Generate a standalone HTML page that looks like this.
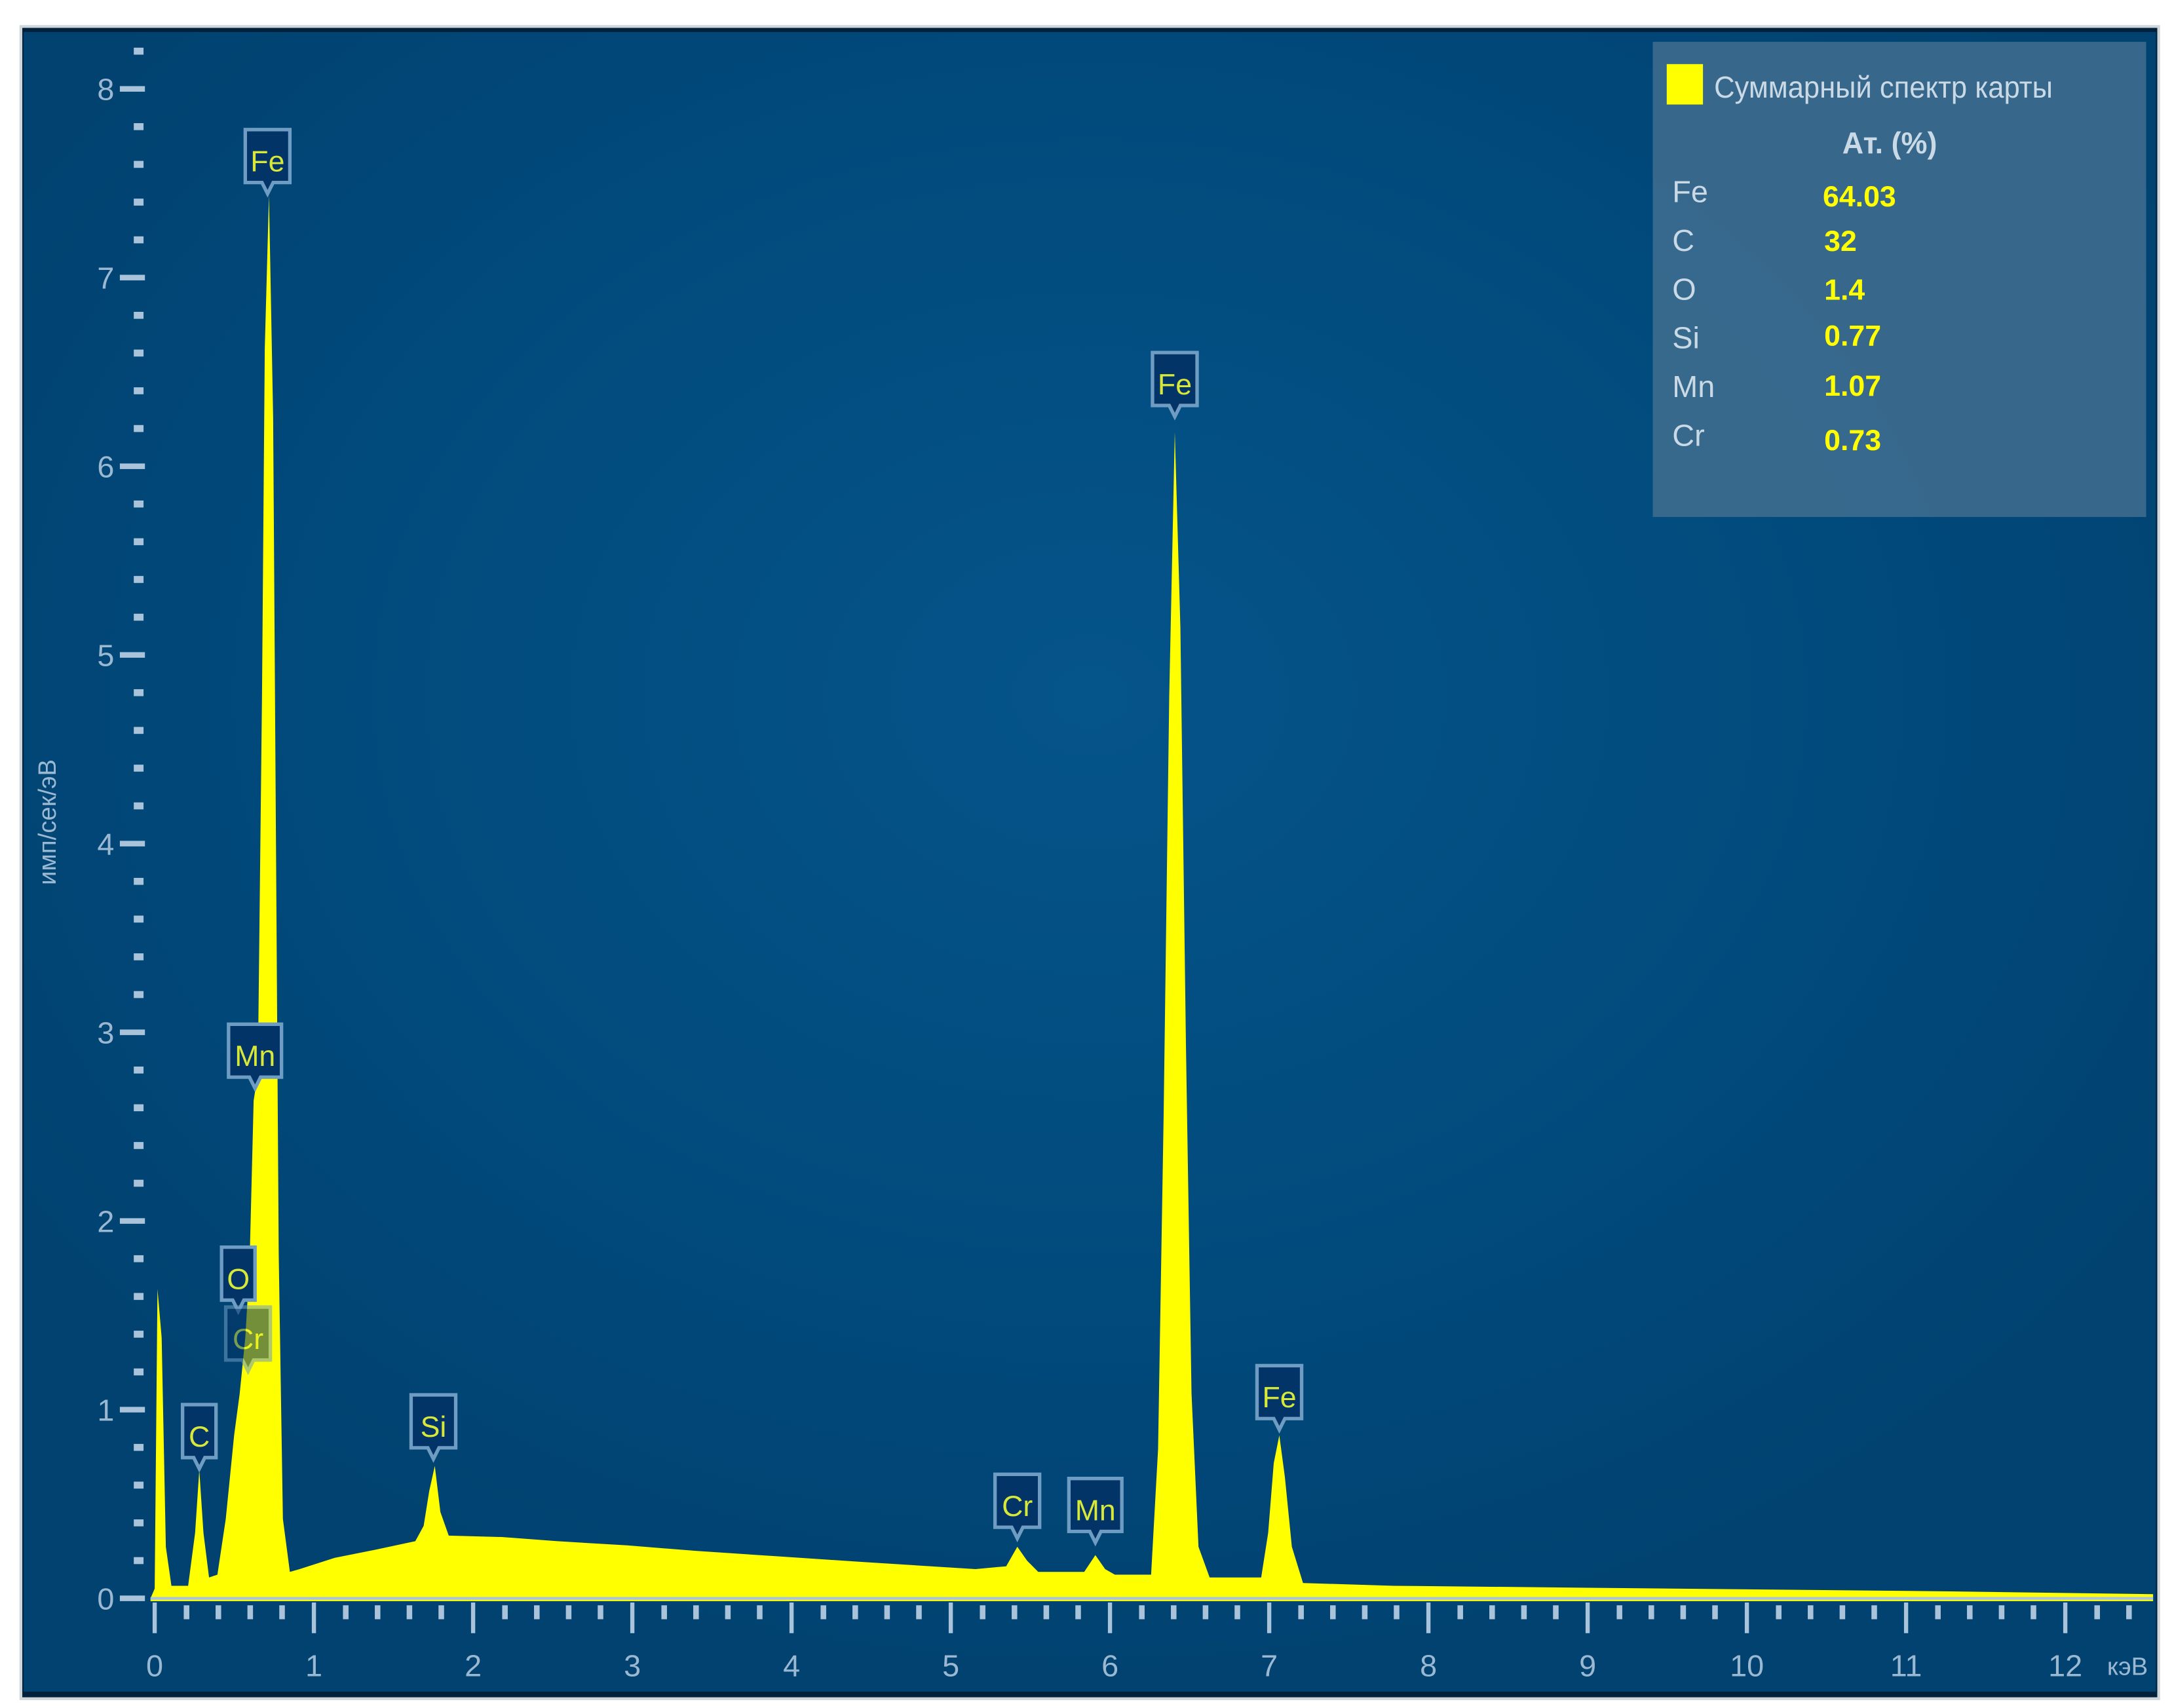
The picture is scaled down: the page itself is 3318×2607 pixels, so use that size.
<!DOCTYPE html>
<html><head><meta charset="utf-8"><style>
html,body{margin:0;padding:0;background:#fff;}
svg{display:block}
</style></head><body>
<svg id="s" width="3318" height="2607" viewBox="0 0 1560 1225.7" preserveAspectRatio="none" xmlns="http://www.w3.org/2000/svg">
<defs>
<radialGradient id="bg" cx="0.5" cy="0.4" r="0.6">
<stop offset="0" stop-color="#05548a"/>
<stop offset="0.6" stop-color="#014a7c"/>
<stop offset="1" stop-color="#014270"/>
</radialGradient>
</defs>
<rect x="0" y="0" width="1560" height="1226" fill="#fff"/>
<rect x="14" y="18" width="1536" height="1202" fill="#cfd6dc"/>
<rect x="16" y="20" width="1532" height="1198" fill="#01203a"/>
<rect x="17" y="23" width="1530" height="1191" fill="url(#bg)"/>
<rect x="1186" y="30" width="354" height="341" fill="#3c6b8e" opacity="0.92"/>
<rect x="1196" y="46" width="26" height="29" fill="#ffff00"/>
<g font-family="'Liberation Sans Narrow','Liberation Sans',sans-serif" fill="#c9d9e6" font-size="22">
<text x="1230" y="70" textLength="243" lengthAdjust="spacingAndGlyphs">Суммарный спектр карты</text>
<text x="1322" y="110" font-weight="bold" textLength="68" lengthAdjust="spacingAndGlyphs">Ат. (%)</text>
<text x="1200" y="145">Fe</text>
<text x="1200" y="180">C</text>
<text x="1200" y="215">O</text>
<text x="1200" y="250">Si</text>
<text x="1200" y="285">Mn</text>
<text x="1200" y="320">Cr</text>
</g>
<g font-family="'Liberation Sans Narrow','Liberation Sans',sans-serif" fill="#ffff00" font-size="21" font-weight="bold">
<text x="1308" y="148">64.03</text>
<text x="1309" y="180">32</text>
<text x="1309" y="215">1.4</text>
<text x="1309" y="248">0.77</text>
<text x="1309" y="284">1.07</text>
<text x="1309" y="323">0.73</text>
</g>
<g font-family="'Liberation Sans Narrow','Liberation Sans',sans-serif" fill="#9ab8d2" font-size="22" id="ax">
<text transform="translate(40,590) rotate(-90)" text-anchor="middle" font-size="18">имп/сек/эВ</text>
<text x="1512" y="1202" font-size="18">кэВ</text>
</g>
<g id="ticks" fill="#a9c3da"></g>
<path fill="#ffff00" d="M108,1147 L111,1140 L113,925 L116,960 L119,1110 L123,1138 L135,1138 L140,1100 L143,1055 L146,1100 L150,1132 L156,1130 L162,1090 L168,1030 L172,1000 L176,960 L179,910 L182,790 L185,770 L188,500 L190,250 L193,140 L196,300 L198,600 L200,900 L203,1090 L208,1128 L215,1126 L240,1118 L270,1112 L298,1106 L304,1095 L308,1070 L312,1052 L316,1085 L322,1102 L360,1103 L400,1106 L450,1109 L500,1113 L560,1117 L620,1121 L700,1126 L722,1124 L730,1110 L737,1120 L745,1128 L778,1128 L786,1116 L793,1126 L800,1130 L826,1130 L831,1040 L835,800 L839,500 L843,310 L847,450 L851,750 L855,1000 L860,1110 L868,1132 L905,1132 L910,1100 L914,1050 L918,1030 L922,1060 L927,1110 L935,1136 L1000,1138 L1200,1140 L1400,1142 L1545,1144 L1545,1149 L108,1149 Z"/>
<line x1="108" y1="1147" x2="1545" y2="1147" stroke="#a9c3da" stroke-width="2"/>
<g id="lbl"></g>
</svg>
<script>
var ns="http://www.w3.org/2000/svg";
var t=document.getElementById('ticks'),ax=document.getElementById('ax'),lb=document.getElementById('lbl');
function el(n,a,p){var e=document.createElementNS(ns,n);for(var k in a)e.setAttribute(k,a[k]);p.appendChild(e);return e;}
var y0=1147,py=135.4;
for(var i=0;i<=41;i++){var v=i*0.2,y=y0-v*py;if(y<30)break;
 if(i%5==0){el('rect',{x:86,y:y-2,width:18,height:4},t);var tx=el('text',{x:82,y:y+8,'text-anchor':'end'},ax);tx.textContent=i/5;}
 else el('rect',{x:96,y:y-2.5,width:7,height:5},t);}
var x0=111,px=114.25;
for(var i=0;i<=62;i++){var x=x0+i*0.2*px;if(x>1545)break;
 if(i%5==0){el('rect',{x:x-1.5,y:1150,width:3,height:22},t);var tx=el('text',{x:x,y:1203,'text-anchor':'middle'},ax);tx.textContent=i/5;}
 else el('rect',{x:x-2,y:1152,width:4,height:10},t);}
var L=[["Fe",192,115,1],["Fe",843,275,1],["Fe",918,1002,1],["Mn",183,757,1],["O",171,917,1],["Cr",178,960,0.55],["C",143,1030,1],["Si",311,1023,1],["Cr",730,1080,1],["Mn",786,1083,1]];
L.forEach(function(l){var w=l[0].length>1?32:24;if(l[0]=="Mn")w=38;var g=el('g',{opacity:l[3]},lb);
 el('path',{d:'M'+(l[1]-w/2)+','+(l[2]-22)+' h'+w+' v38 h'+(-(w/2-4))+' l-4,8 l-4,-8 h'+(-(w/2-4))+' z',fill:'#033468',stroke:'#6f9cc2','stroke-width':2.5},g);
 var tx=el('text',{x:l[1],y:l[2]+8,'text-anchor':'middle','font-family':"'Liberation Sans Narrow','Liberation Sans',sans-serif",'font-size':21,fill:'#d8e83a'},g);tx.textContent=l[0];});
</script>
</body></html>
